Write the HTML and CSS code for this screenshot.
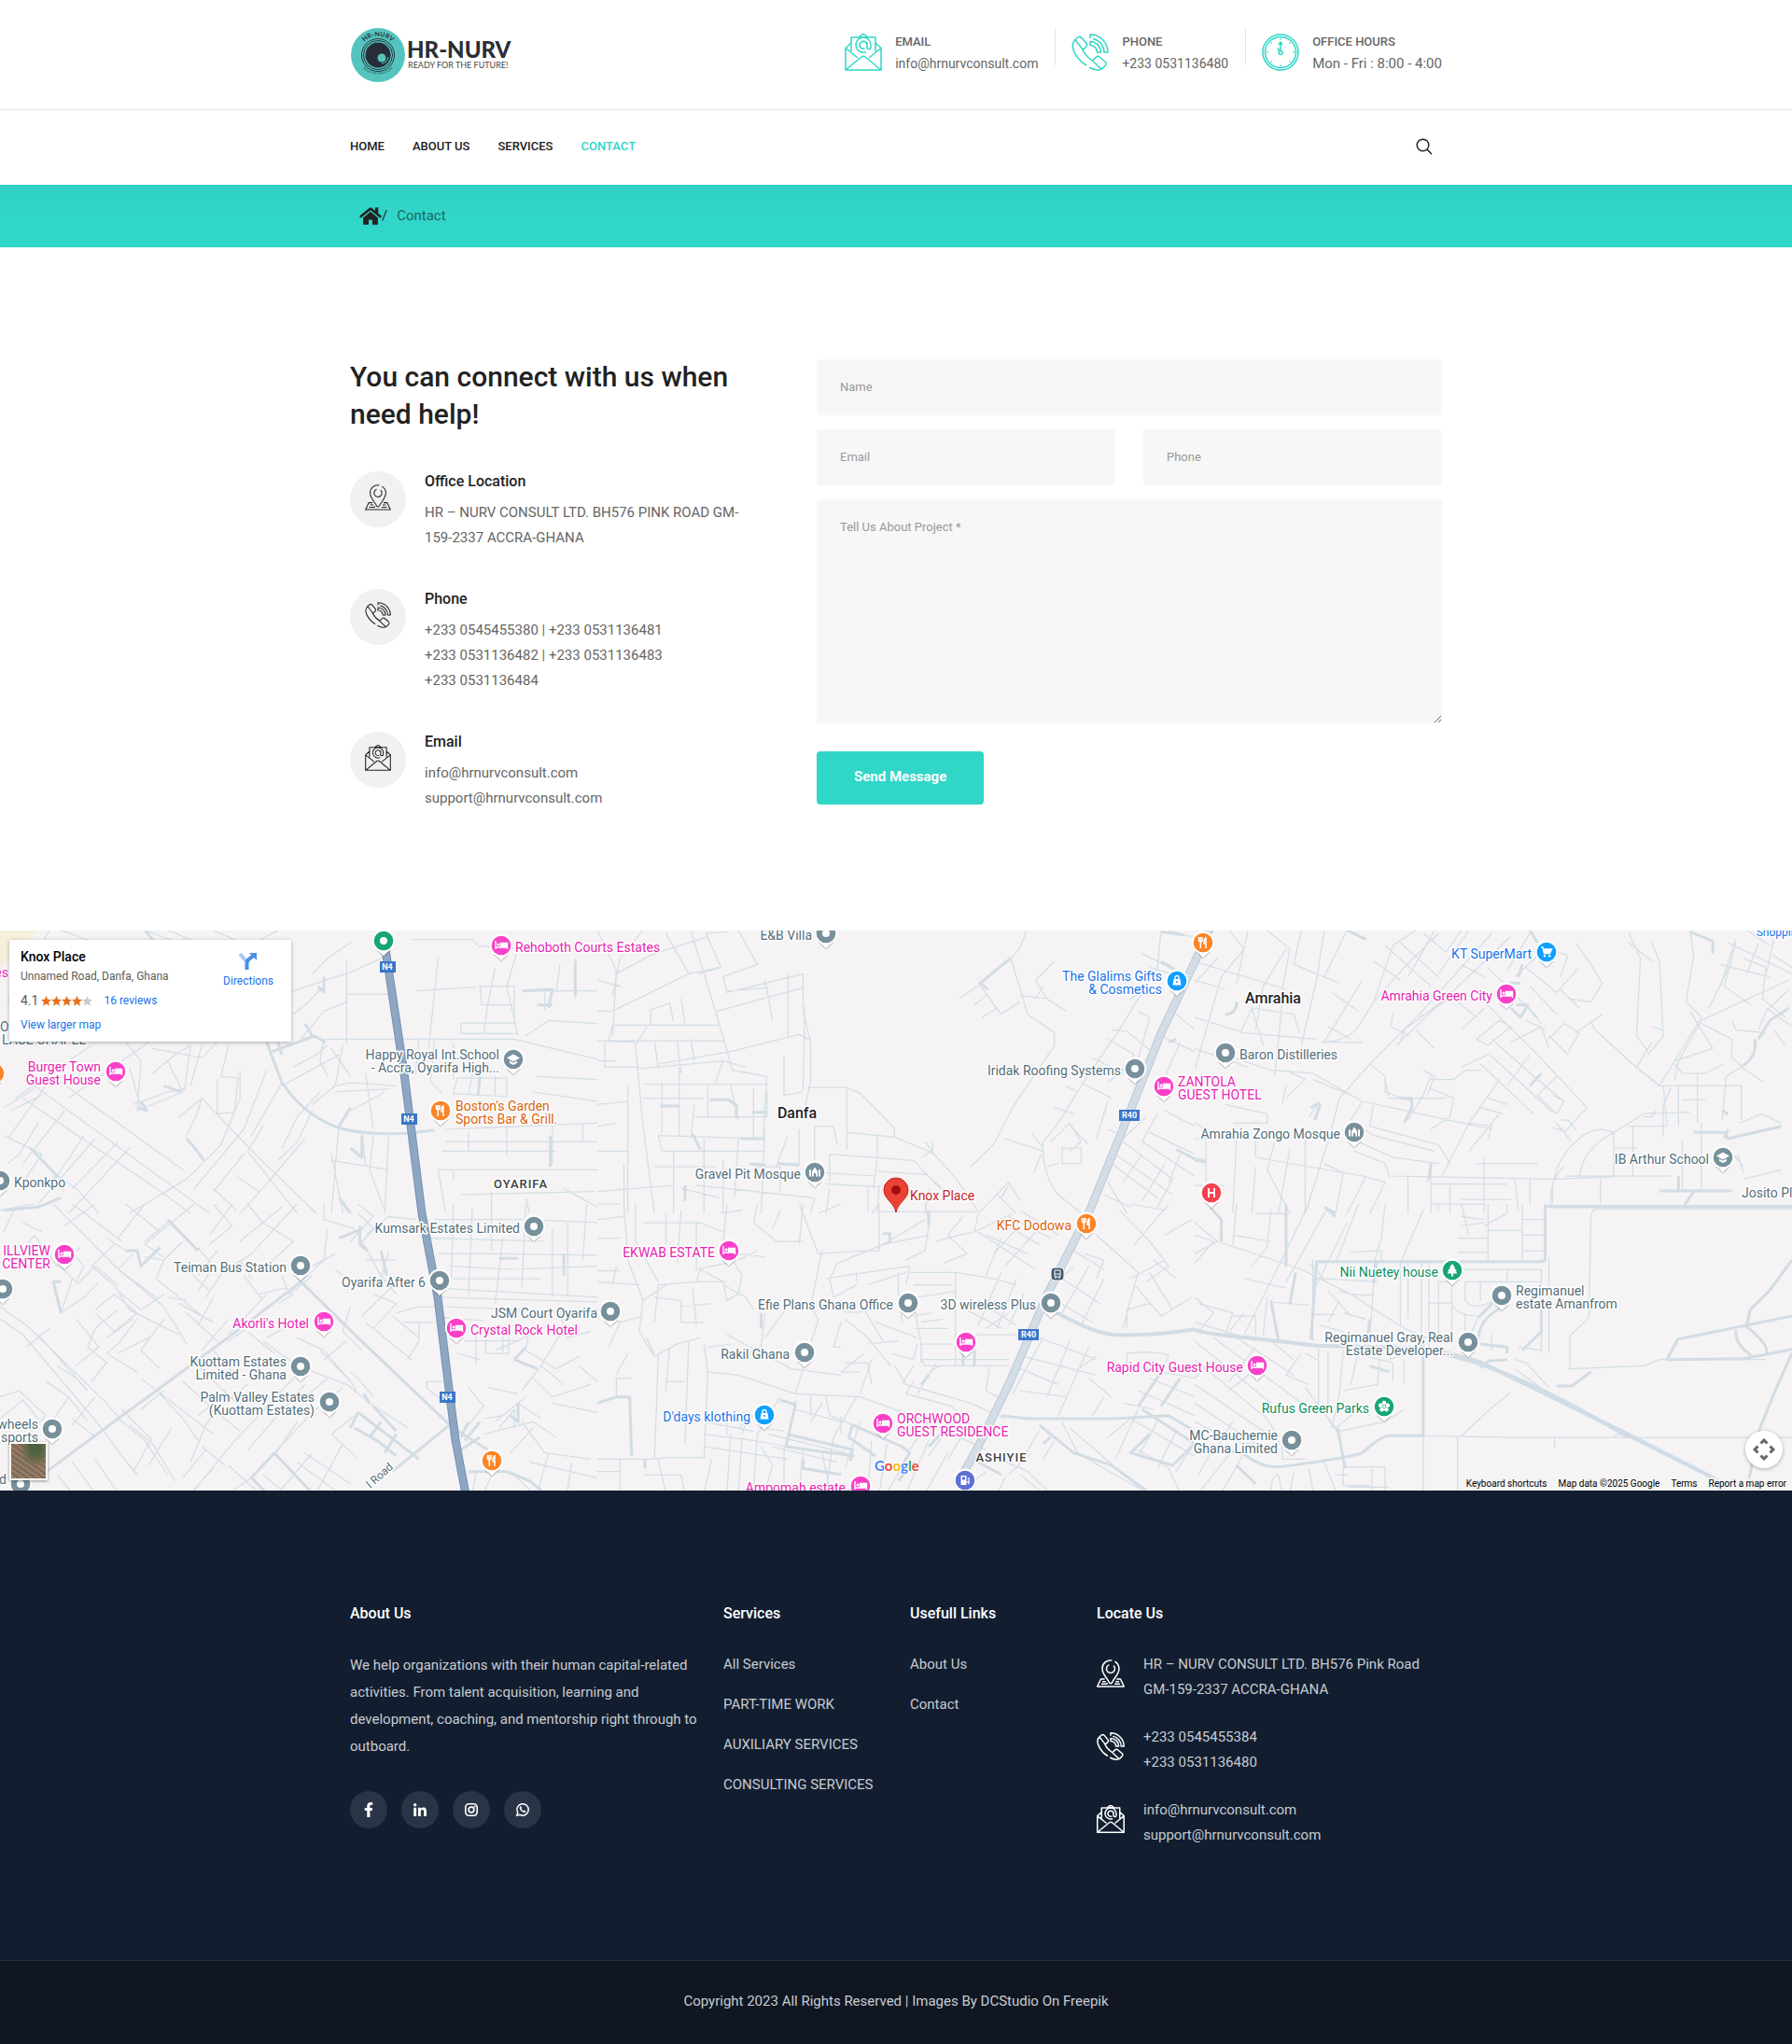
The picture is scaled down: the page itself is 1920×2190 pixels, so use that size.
FILE: index.html
```html
<!DOCTYPE html>
<html lang="en">
<head>
<meta charset="utf-8">
<meta name="viewport" content="width=device-width, initial-scale=1">
<title>Contact - HR-NURV</title>
<link rel="stylesheet" href="styles.css">
</head>
<body>
<svg class="sprite" aria-hidden="true">
  <defs>
    <symbol id="i-mail" viewBox="0 0 40 40">
      <path d="M7 10 1 15.500V39h38V15.500L33 10M7 19V4h26v15M15 4l3-2.500q2-1.500 4 0L25 4M1 15.500 14 26M39 15.500 26 26M1 39l17-14q2-1.500 4 0l17 14"/>
      <path d="M23 19.500a8 8 0 1 1 5-7.500v3q-1 3-4 1V9M24 12.500a4 4 0 1 0-2.500 3.500"/>
    </symbol>
    <symbol id="i-phone" viewBox="0 0 40 40">
      <path d="M4 6.500 7 4q2-1.500 4 .5l5 6q1.500 2-.5 4L12 17.500q3 6.500 10.500 11.500l3.500-3.500q2-2 4-.5l6 5q2 2 .5 4L33 37.500q-6 3.500-14-1.500M16 34Q6 28 2 17.500 0 10 4 6.500l8.500 11M22.500 29l9.500 9"/>
      <path d="M20 5V1a19 19 0 0 1 19 19h-4A15 15 0 0 0 23 5.500M20 8.500a11.500 11.500 0 0 1 11.500 11.500h-4A7.500 7.500 0 0 0 20 12.500z"/>
    </symbol>
    <symbol id="i-clock" viewBox="0 0 40 40">
      <circle cx="20" cy="20" r="19"/><circle cx="20" cy="20" r="16.500"/>
      <path d="M20 18.500V9M18 12l2-3 2 3M20 5v1.500M20 33.500V35M5 20h1.500M33.500 20H35M9.500 9.500l1 1M29.500 29.500l1 1M30.500 9.500l-1 1M10.500 29.500l-1 1M17 15.500l1.500 2.500"/>
      <circle cx="20" cy="20.500" r="2"/>
    </symbol>
    <symbol id="i-place" viewBox="0 0 40 40">
      <path d="M22 1.500A11.500 11.500 0 0 0 8 13c0 8 6 12 10 20q2 2.500 4 0c4-8 10-12 10-20A12 12 0 0 0 26 3"/>
      <path d="M18 7.500a6 6 0 1 0 6 1.200M11.500 28H6L1 38.500h38L34 28h-5.500M8 31.500h5M6.500 35h8l1-1.500M27 31.500h5M25.500 35h8"/>
    </symbol>
    <symbol id="i-search" viewBox="0 0 18 18"><circle cx="7.500" cy="7.500" r="6.300"/><path d="m12 12 5 5.300"/></symbol>
    <symbol id="i-home" viewBox="0 0 576 512"><path d="M280.370 148.260 96 300.110V464a16 16 0 0 0 16 16l112.060-.29a16 16 0 0 0 15.920-16V368a16 16 0 0 1 16-16h64a16 16 0 0 1 16 16v95.640a16 16 0 0 0 16 16.050L464 480a16 16 0 0 0 16-16V300L295.670 148.260a12.190 12.190 0 0 0-15.300 0zM571.600 251.470 488 182.560V44.050a12 12 0 0 0-12-12h-56a12 12 0 0 0-12 12v72.610L318.470 43a48 48 0 0 0-61 0L4.340 251.470a12 12 0 0 0-1.600 16.900l25.500 31A12 12 0 0 0 45.150 301l235.220-193.740a12.190 12.190 0 0 1 15.300 0L530.900 301a12 12 0 0 0 16.900-1.600l25.500-31a12 12 0 0 0-1.700-16.930z"/></symbol>
    <symbol id="i-facebook" viewBox="0 0 320 512"><path d="m279.140 288 14.220-92.660h-88.910v-60.130c0-25.350 12.420-50.060 52.240-50.060h40.420V6.260S260.430 0 225.360 0c-73.220 0-121.080 44.380-121.080 124.720v70.620H22.890V288h81.390v224h100.170V288z"/></symbol>
    <symbol id="i-linkedin" viewBox="0 0 448 512"><path d="M100.280 480H7.400V180.900h92.880zM53.790 140.100C24.090 140.100 0 115.500 0 85.800a53.790 53.790 0 0 1 107.580 0c0 29.700-24.100 54.300-53.790 54.300zM447.900 480h-92.680V334.400c0-34.700-.7-79.200-48.290-79.200-48.290 0-55.690 37.700-55.690 76.700V480h-92.780V180.900h89.080v40.800h1.300c12.400-23.500 42.690-48.300 87.880-48.300 94 0 111.280 61.900 111.280 142.300V480z"/></symbol>
    <symbol id="i-instagram" viewBox="0 0 16 16"><rect x="1.800" y="1.800" width="12.400" height="12.400" rx="3.600" fill="none" stroke="currentColor" stroke-width="1.600"/><circle cx="8" cy="8" r="2.900" fill="none" stroke="currentColor" stroke-width="1.600"/><circle cx="11.600" cy="4.400" r="1"/></symbol>
    <symbol id="i-whatsapp" viewBox="0 0 16 16"><path d="M1.800 14.200 2.700 11A6.200 6.200 0 1 1 5 13.300z" fill="none" stroke="currentColor" stroke-width="1.500"/><path d="M5.300 4.600q.8-.8 1.200.1l.6 1.300-.7 1q.8 1.500 2.500 2.300l.8-.9 1.700.8q.3 1.600-1.400 1.900-1.600.2-3.600-1.800-2.600-2.600-1.100-4.700z"/></symbol>

    <g id="pin">
      <path class="pin-shadow" d="M0 17.500 8 10H-8z"/>
      <path d="M0 16.500C-2 13-5 12-8.500 8.500a12.200 12.200 0 1 1 17 0C5 12 2 13 0 16.500z" fill="#fff"/>
      <circle r="10.300" fill="currentColor"/>
    </g>
    <g id="g-dot"><use href="#pin"/><circle r="4" fill="#fff"/></g>
    <g id="g-bed"><use href="#pin"/><path d="M-6-5v9M-6 2H6.500v2M6.500 2V-2.500H-.5V2" fill="none" stroke="#fff" stroke-width="1.400"/><path d="M0-2.500h6V2H0z" fill="#fff"/><circle cx="-3" cy="-1" r="1.500" fill="#fff"/></g>
    <g id="g-food"><use href="#pin"/><path d="M-4.500-6v4q1.800 2 3.600 0v-4M-2.700-6V6M3 6V-5q-2 1-2 6h2" fill="none" stroke="#fff" stroke-width="1.500"/></g>
    <g id="g-bag"><use href="#pin"/><path d="M-3.500-2h7l1 6.500h-9z" fill="#fff"/><path d="M-2-2v-1.500a2 2 0 0 1 4 0V-2" fill="none" stroke="#fff" stroke-width="1.300"/><circle cy="1" r="1" fill="currentColor"/></g>
    <g id="g-school"><use href="#pin"/><path d="M-7-1.500 0-5.500l7 4L0 2.500zM-4 1.500 0 3.800l4-2.300V4L0 6l-4-2z" fill="#fff"/></g>
    <g id="g-mosque"><use href="#pin"/><path d="M-6 4.500V-2l1-1.500L-4-2v6.500zM4 4.500V-2l1-1.500L6-2v6.500zM-3 4.500V-1L0-5.500 3-1v5.500H1.200V2a1.200 1.200 0 0 0-2.400 0v2.500z" fill="#fff"/></g>
    <g id="g-cart"><use href="#pin"/><path d="M-6-5h2l1.500 6.500h6L5.500-3H-3" fill="none" stroke="#fff" stroke-width="1.400"/><path d="M-3-3h8L3.500 1h-6z" fill="#fff"/><circle cx="-2" cy="4.300" r="1.200" fill="#fff"/><circle cx="3.200" cy="4.300" r="1.200" fill="#fff"/></g>
    <g id="g-hospital"><use href="#pin"/><path d="M-3-5V5M3-5V5M-3 0h6" fill="none" stroke="#fff" stroke-width="2"/></g>
    <g id="g-tree"><use href="#pin"/><path d="m0-7 3 4H2l3 4H3.500L5.500 3.500H1V6.500h-2v-3h-4.500L-3.500 1H-5l3-4h-1z" fill="#fff"/></g>
    <g id="g-flower"><use href="#pin"/><g fill="#fff"><circle cy="-4" r="2.300"/><circle cx="3.800" cy="-1.200" r="2.300"/><circle cx="2.400" cy="3.300" r="2.300"/><circle cx="-2.400" cy="3.300" r="2.300"/><circle cx="-3.800" cy="-1.200" r="2.300"/></g><circle r="1.500" fill="#fff"/></g>
    <g id="g-fuel"><use href="#pin"/><path d="M-4.500-5h6V5h-6z" fill="#fff"/><path d="M-3-3.500h3v3h-3z" fill="currentColor"/><path d="M2 1.500q2 0 2 2.500V-3" fill="none" stroke="#fff" stroke-width="1.200"/></g>
  </defs>
</svg>

<header class="header">
  <div class="wrap header-top">
    <a class="logo" href="#" aria-label="HR-NURV home">
      <svg width="184" height="60" viewBox="0 0 184 60">
        <defs><path id="arc-top" d="M11 22a21 21 0 0 1 38 0"/><path id="arc-bottom" d="M10 38a22 22 0 0 0 40 0"/></defs>
        <circle cx="30" cy="30" r="29" fill="#55c4be"/>
        <circle cx="30" cy="30" r="17.500" fill="none" stroke="#26333d"/>
        <circle cx="30" cy="30" r="15.500" fill="none" stroke="#26333d"/>
        <circle cx="30" cy="30" r="13.500" fill="#272d38"/>
        <circle cx="34" cy="33" r="4.500" fill="#55c4be"/>
        <path d="M34 39a8 8 0 0 0 7-7" fill="none" stroke="#55c4be"/>
        <text class="logo-ring"><textPath href="#arc-top" startOffset="50%">HR-NURV</textPath></text>
        <text class="logo-ring-small"><textPath href="#arc-bottom" startOffset="50%">READY FOR THE FUTURE!</textPath></text>
        <text class="logo-name" x="61" y="33">HR-NURV</text>
        <text class="logo-tag" x="62" y="44">READY FOR THE FUTURE!</text>
      </svg>
    </a>
    <ul class="facts">
      <li class="fact"><svg class="line-icon"><use href="#i-mail"/></svg><div><h6>EMAIL</h6><a href="#">info@hrnurvconsult.com</a></div></li>
      <li class="fact"><svg class="line-icon"><use href="#i-phone"/></svg><div><h6>PHONE</h6><a href="#">+233 0531136480</a></div></li>
      <li class="fact"><svg class="line-icon"><use href="#i-clock"/></svg><div><h6>OFFICE HOURS</h6><p>Mon - Fri : 8:00 - 4:00</p></div></li>
    </ul>
  </div>
  <div class="nav-row">
    <div class="wrap nav-inner">
      <nav class="nav">
        <a href="#">HOME</a><a href="#">ABOUT US</a><a href="#">SERVICES</a><a class="active" href="#">CONTACT</a>
      </nav>
      <button class="search" type="button" aria-label="Search"><svg width="18" height="18"><use href="#i-search"/></svg></button>
    </div>
  </div>
</header>

<div class="crumbs">
  <div class="wrap crumbs-inner">
    <a href="#" aria-label="Home"><svg width="24" height="21"><use href="#i-home"/></svg></a><span class="slash">/</span><span class="here">Contact</span>
  </div>
</div>

<main>
  <section class="wrap contact">
    <div>
      <h2>You can connect with us when need help!</h2>
      <ul class="places">
        <li><span class="disc"><svg><use href="#i-place"/></svg></span><div><h5>Office Location</h5><p>HR – NURV CONSULT LTD. BH576 PINK ROAD GM-159-2337 ACCRA-GHANA</p></div></li>
        <li><span class="disc"><svg><use href="#i-phone"/></svg></span><div><h5>Phone</h5><p>+233 0545455380 | +233 0531136481<br>+233 0531136482 | +233 0531136483<br>+233 0531136484</p></div></li>
        <li><span class="disc"><svg><use href="#i-mail"/></svg></span><div><h5>Email</h5><p>info@hrnurvconsult.com<br>support@hrnurvconsult.com</p></div></li>
      </ul>
    </div>
    <form class="form">
      <input class="full" type="text" placeholder="Name" aria-label="Name">
      <input type="email" placeholder="Email" aria-label="Email">
      <input type="tel" placeholder="Phone" aria-label="Phone">
      <textarea class="full" placeholder="Tell Us About Project *" aria-label="Tell Us About Project"></textarea>
      <button type="submit">Send Message</button>
    </form>
  </section>

  <section class="map" aria-label="Map">
    <svg class="map-canvas" viewBox="0 0 1920 600" preserveAspectRatio="xMidYMid slice">
      <rect width="1920" height="600" fill="#f5f3f4"/>
      <path d="M0 0h40L0 40z" fill="#f6efdc"/>
      <svg x="0" y="-7" width="640" height="310" viewBox="0 0 1568 930" preserveAspectRatio="none">
        <path class="rd" d="M130 20 20 250M160 20l90 40M380 20l110 50M440 20l120 60 210 140M770 215l150-60 90-50M850 190v30M820 160l40-50 60-50M670 60l60-40M560 20l110 60M910 120v270M910 225h130M770 290l40-40 30-40M790 370l60-90 60-30M850 370h500l218 65M1080 50h160l20 25M1260 70l100 10-30 120 30 160M1090 215l160-12M1150 110l-25 290M1260 200h90v60h-85zM1300 140l-20 120-10 90M1210 318h140v-55M1210 318v34h150M1380 215h188M1430 215v60M1470 130l-10 90M1510 110v130M1380 360l60-50 128 10M1100 365l-10 120M1140 375l-10 130 30 40M1190 380v120M1240 480l-10 70M1200 495h130v60l-140-10zM1300 490v60M1410 490l158 10M1400 540l168 30M1170 660l398-20M1170 700h398M1160 730h300M1230 670v60M1330 650v90M1450 650v120M1530 640v60M1150 790h418M1150 790l20 140M1190 790v30M1210 870l350-10M1290 860v70M1380 880l10 50M1480 850l88 60"/>
        <path class="rd" d="M240 390 40 560M330 380l40 60-10 160M390 380 180 560M400 400l130 30 40-50M400 480l60-60 40-30M500 390l-15 140-45 10M530 390l-30 130M440 440l40 100-120 60M60 560l350 290 90 80M90 520l460 410M150 500l330 290M20 690l100-170M10 590l80-60M340 460l30 130M440 540l-90 40M470 620l60-60M530 560l-10 40-30 80M530 560l140 180 160 190M600 390l-20 100 45 5-10 110-45 5V500M630 470v90l-50 150-90 110-150 110M700 470l-60 190-130 190M740 510l-80 170M740 520l90-60 60-40M770 460l60-40 30-30M850 370l-10 70 20 50M870 400l50 90M900 390l-20 130-60 60M960 480l20 180M880 520l40-10 120 10M880 540l140-10M920 600l90-60M840 540l-60 80-40 100M820 600l-40 100-50 60M800 690l-110 160-60 80M690 650l-40 80 130 200M640 740l-80 120M560 850l60 70M620 810l60 50M890 640l-20 290M870 740l30 190M950 670l10 110M980 680l-10 110 40 130M1020 680l-10 250M870 760l150 30M30 600l80-50M10 680l100 60-60 110M100 640l-50 100-30 30M170 600l-110 170M220 680l-70 130 50 40M310 700l-120 150M250 690l-150 210M200 850l60 80M340 720l-160 210"/>
        <path class="rd2" d="M700 380l40 130q50 90 120 130 60 40 210 33l70-10M730 380l10 40M715 410l110-50 30 20M820 360l-20-40M430 520l45 20M490 690l15 20 30 50M370 570l15 30-25-10M850 170v50l-15-20M80 720l70 90-20 20M10 920l90-10 60-30M890 650l30-60M1370 215l80-5-10 60M1410 260h40M1260 490l-5 60M1445 680v100M1510 120v110M890 880l30 50M380 20l40 60M480 50l50 30M950 680v70l-30-30"/>
      </svg>
      <svg x="640" y="-7" width="640" height="310" viewBox="0 0 1568 930" preserveAspectRatio="none">
        <path class="rd" d="M0 20l50 130-10 210M120 20l-60 90-20 120M180 30l60 130M50 160l90-60 150-60M245 20l70 280 40 170 90 20-10 200M315 280l225-75M40 280l200-120 80-20M0 180l60 20M0 280h40M345 25l-60 5 40 110-60 20M370 20l50 110-90 40 10 50 200-60v120l20 100v120l-15 90M340 215l110-10M440 180l20 130M500 160v200M545 265l-5 270M40 325h280M40 325l-10 50h300M140 325v-50l50-20 10 60M220 240l10 80M130 330l-30 60 20 260 30 280M0 375l100 5M20 375v85h90M150 375l10 90M210 380l10 100M245 370l10 70M0 440h50M160 450l190-40 180-55 30 20M110 465l220-25 60 20M330 440l-20 70M120 515l330 0M215 460v220M120 560h160M80 520v410M0 580l80-10M0 650l50-10M170 510v160M290 520v100M350 520l20 110M255 620h190v-80M255 580l-10 110M410 530v160M160 680l270 10M160 680l10 50h270M200 730v200M280 690v240M370 690l-10 190M440 660l-10 270M490 420v130l50-10M550 525h105l35 20 90 110v30l100 50 60 80 60 110M655 525v200M655 670l130 15M570 650v110M570 650h50l10 60M735 680v70l-10 100M610 740l220 20 70 90M610 740v90M600 800l130 10M600 835l140 10M735 795l130 10 70 80M860 700l20 30-30 20M880 700v40M0 730h80M0 860l200-20M70 770v150M0 900h60M150 780h160M330 760v170M220 850l100 30M260 840l310 40M410 780h70v80M500 680l-30 100M530 660v110M570 880l-10 50M610 850l-10 80M740 840l-5 85 260 0M710 850v75M870 850l-10 80M1000 930l80-100 30 60M1080 840l-20 40M1050 870l50 60M1125 20q-10 60-40 90l30 120 15 60 70 60v40l-110 200-50 120-60 70M1200 120l-50 60 30 60-70-10M1180 240l50 40M1170 200l-20 40M1110 250l-50 40-60-100M950 240l60-50M990 260l30-30M1010 300l40-30M1070 690l100 40M1140 670l30 50M1165 740l-20 60"/>
        <path class="rd" d="M1480 20l-10 120-100 200-100 180-60 120-40 60q-5 100 40 170l60 60M1430 95l80 50M1450 140l60 20M1400 240l50-40M1420 280l30 20-30 130-80 80M1350 340l40 5 60 60M1340 370l70 50-40 60M1300 430l80 50M1270 510l80 50M1230 520l30 20M1200 590l50 20M1500 20l60 20M1510 280l58 60M1480 360l88 50M1530 380l-40 110-10 50M1490 600l78 50M1470 610l-40 90 138 110M1450 670l118 70M1340 660l20 10M1370 690l140 130-40 90M1360 740l150 130M1350 770l120 110M1380 690l60-70M1430 740l-50 90M1490 770l-60 120M1530 740l-30 90M1220 720h50v50h-50zM1190 700l50-60 30 60-30 30M1310 690l30-120M1250 660l40 50M1340 830l50 100M1330 870l70 40M1400 900l90 20M1180 780l30-10"/>
        <path class="rd2" d="M295 565h50l20 20v40M405 605h40M440 605M250 675l20 50M375 690h65M400 770l40 5M475 770l55 5M230 840v50M165 585h50M1085 110l-80 80 20 20M1480 25l60 10M1480 120l40 30M1520 725l48 30M1500 380l20-10"/>
      </svg>
      <svg x="1280" y="-7" width="640" height="310" viewBox="0 0 1568 930" preserveAspectRatio="none">
        <path class="rd" d="M60 110 0 190M90 20l40 60-60 90-70 300M0 180l80 30M0 120l240 90M140 20l-30 170M190 20l60 60-20 130M240 80l-60 120-20 140M280 20l-20 110 120 60M340 20l-20 160-40 210M400 20l-60 150M0 300l130 50 190 20M120 350l30-80 110 20 15 60M150 270l30 120M230 250l-20 240M80 420l120 50 110 10 130 90 340 90M0 400l140 60M330 380q80 0 110-70l30-60 80-110 90-110M440 180l-100 200 100 0M360 220l70 60M350 330l60 40M470 250l50-180 60-50M500 70l120 130M540 60l100 110M470 120l70 60M560 170l70-150M600 30l60 60 40-70M640 160l80-140M780 30 590 290 460 450 380 560 350 700l-60 230M830 40 640 260 530 390M770 140l130 160M880 30l-60 120M700 130l60 40M580 340l50 60M590 300l80-60M520 290l-5 40 50 30M540 380l10-40 120-110M700 340l60-70M690 250l50 50M600 470l30 20-20 60M760 250l140 170 130 170-60 80M740 370l60-60 30 20-60 60zM780 370l110 120 80 80M770 415l170 190M700 460l70-40M750 450l140 160M620 490l-20 60-40 80M620 500l60 0 30-30h40M620 530l60 30-10 60-50 40M500 500l10 60 150 0M830 380l80-50 20 70M880 420l-60 100M920 380l50-60 40 30-30 60M920 340l-50-30M1000 350l70-60M1040 310l10 30 100 110 60 60M930 360l50 60M860 250l50 70M840 170l80-90 60 20-20 70M870 140l80 80 60-80M880 200l70 90M960 210l50 60M980 240l60 10 30-60-30-60-40-70M940 550l30 20-20 40-50-60 50-60M800 500l-80 140M770 560l50 20M750 590l60 20M720 640l60 10-10 40M720 640l-70 170M800 610l-80 120"/>
        <path class="rd" d="M460 450l40 40v50l70 30M440 570l-30 60 60 50M470 570l-10 80 180 60 30 60M470 680l160 50M430 700l90 50 120 20M420 730l80 40 10 40M510 810l430 10 160-8M160 750l280 60 60 20M160 750l0-60M110 690l-10 240M160 780l-10 150M0 690h110M30 700v200M0 750l30 10M0 840h80M100 640h90v-30L80 580M0 640l80 50M240 470l50 30-50 60M240 520l-10 60M310 500l100 50M300 620l30-50M210 700l-20 90 60 140M250 720l-30 210M290 690v240M340 770l50 30-20 130M450 810l-50 120M500 830l-40 100M560 810v120M620 820v110M620 770l-10 60M620 836h200M760 750v180M820 770h80M740 770h100M840 820l10 100M880 820v80M670 840v90M620 900h140M700 885h130M970 780q-40 40-35 130M940 900q-10-120 60-200 30-40 70-40l30 10v140M1010 810q10-90 90-140M950 640l40 60M960 630h20l20 30M940 655l30 10M1100 670l80-60 120-5M1150 650v160M1100 720h60M970 810l280 0M1065 810v90M1180 620h20l10-20M1140 650h100M1240 650l-10-130M1215 520h220v110M1250 525l-20 60 0 100M1270 520v130M1320 480v160M1280 565h60M1385 630l10-140 40-30 60 50M1330 640v220M1280 700v160M1250 760h90M1400 720l40 60M1430 640l60-30 48 30M1440 820l100-30M1440 800l-15-60"/>
        <path class="rd" d="M1200 60l20 60 10 240-40 60M1140 30l30 80-10 250 30 50M1140 60l60 60M1300 20l10 80-20 150 40 50-90 180-20 40-60-60 40-80M1330 310l70-40 160-90M1330 310l-60 130-10 60M1350 270l60-150M1380 200l40-150M1330 320l80 50v60l30 30M1300 280l60 120-100 40M1260 450l20 30h60l50-30M1200 330l30 10M1420 60l-30 140 70 60M1440 110l60 30-10 100 60 60M1400 60l168 100M1480 60l-30 100M1520 50l-20 110M1410 310l10 30 80 10M1500 270l68 60M1520 340l30 50M1560 210l-60 70-20 60M1380 130l130 40M1568 140l-50-40M1450 20l60 50"/>
        <path class="rd2" d="M920 908h648M570 560v30l-20 50M540 560h30M305 590l20-15M330 580l-15 50M910 480l-30 40M850 170l10-40M825 190l30 0M830 270l25 30 20-40h-30M880 20l20 40M110 250q0 40-30 40M1310 670h80l10 20 140-40M1390 690l10-30M1310 860l-25 45M1220 858h190M1300 25l60 30 0 40M1470 370q10 50-30 85M1560 270l-50 40-30 60M1270 810v50M1385 600l15 10M620 770l-3 50M400 20l50 30M0 760l30 5M340 910l30 20"/>
      </svg>
      <svg x="0" y="293" width="640" height="310" viewBox="0 0 1568 930" preserveAspectRatio="none">
        <path class="rd" d="M0 20 90 0M60 60l50 30M10 90l30-80M140 0l170 210 120 120 60 120M190 0l130 120M330 0l90 90M380 0l-70 110M250 0l-80 70M510 0l-130 130 50 40M560 0l50 70-60 60M610 0l-60 100M650 0l40 60 80 60-80 90M740 10l-60 60-50 50M780 0l-120 160-50 40M850 0v50l80 30M860 80l-10 100-60 70M940 0l40 40-60 80M820 200l60-40M440 60l-60 60M350 160l-40 50 100 90M330 150l-50-40M300 130l-60 70M480 120l-50 60-20 60 130 130M430 180l-50-10M500 220l50 60M520 140l40 60-40 80M570 150l-50 80M600 190l-60 110M90 100l60 100 60-60M90 100l-40 70M150 190l50 60 20-50-40-60M200 260l50-60 60 60M190 240l-30 110 60-50 40-50M240 200l60 60 40 80 130 80M0 330l70 60 210 250 40 60 60 60 60 110M0 370l60 50 200 290 60 100 40 60M100 420l130 180M130 400l-60 60M200 370l60 90-60 60M250 350l50 60 60-60-60-60-50 50M310 280l60 60 60-50M310 340l-60 60-20 60 50 50-40 60M280 430l70-60M360 370l-50 80-30 30 80 60M310 480l80-50M430 370l-60 100 50 60M470 320l90 60M490 350l80 90M440 300l50 10M600 370l-70 100M560 300l-40 90M640 230l50 80M680 290l70-20 20 20-40 30M740 230l20 60 60-60M630 180l30 60M600 420l100-130M0 690l60-60 40 60M0 620l50-20M50 600l70 80-70 90M120 570l60 50-60 110M180 620l50 80M250 620l-60 90M190 690l60 60M200 560l-50-40"/>
        <path class="rd" d="M370 560l190 180M430 600l-60 60M560 470l60 80M420 610l60 80 40 70M480 570l80 90 70 70M520 520l110 130M520 680l40-40M600 620l-60 90-40 120M540 790l-60 90M340 710l60 60 60 120M320 660l80 100M400 750l-50 110M450 720l-60 120M650 580l-60 60M770 560l-160 210-100 150M800 580l-150 210M860 560l-60 60M690 440l90 80 130 60 60 60 100 80M700 430l60-40M780 430l70 40 70 100M840 470l80 100 20 40M920 540l20 20 40 60M600 440l60-50M650 410l70 70M850 500l60-60M900 590l-80 80-100 130M930 680l-60 60 70 80M780 700l-60 110M820 800l-90 130M900 770l-70 160M690 870l60 60M660 880l-60 50M600 840l80 90M780 830l110 100M800 800l120 100M530 780l60 60M560 850l-60 80M250 820l60 110M190 830l60 100M150 870l40 60M1120 570h50v40M1120 570v20l70 70M940 30l50 60M960 100l60-60 70 10M1000 60l-50 60 50 110 40 60M900 230l-20-20M930 240l110 10M1020 150l-20 90M960 180h80M1050 240l-50 60-50 60M920 330l-20 80 50 60M980 290l60 30-60 80M1040 350l60-20 40 0M1060 380l80 0M1100 380v60l-30 60M960 380l120 120M1030 360l70 70M1160 300l408 15M1170 330l400 20M1150 365l120 10M1140 50h230l198 10M1130 110l300 10M1150 160h160l258 5M1180 200l160 10 228-10M1190 240h230M1150 270l418 30M1190 0l-5 240M1240 10l-10 280M1290 0v150M1320 110l-20 210M1380 0l-10 270M1450 80v220M1490 60v240M1540 0l-10 180M1250 420v100M1220 440h140l30-20M1275 430v50h60v-50M1320 420v60M1360 440l-60 30M1390 400l-10 70 80 60 60-40M1470 350l20 80 60-20M1480 400l-60 120-50 80M1420 520l60 60M1360 610l-80-20M1380 620l-60 60-50 10M1230 590l40 60-40 60M1300 700l60-60 60 50M1310 720l40-60v60M1270 740l130-40 60 50M1400 560l50 60 100-40M1450 640l118 30M1370 700l60 100 120 20M1400 720l-60 80M1250 860l-10 70M1290 870l-20 60M1340 860l60 70M1440 800l-30 130M1500 830l-10 90M1390 830l178 50M1200 480l60 20M1520 520l48 50"/>
        <path class="rd2" d="M100 880 310 690 400 610 620 410 790 250l150 180 240 280M790 250l-20-40M330 150h30l10 50 50-60M440 50l80 100M160 350l-20-100 20 0M945 70v60l20 20M940 670l160 150M930 720l60 40 50 50M940 670l-20 50M980 650l60 80M1000 700l-30 50M1040 740l-30 60M1090 800l90-90M1090 800l-60 60M1190 720l90 70M1220 760l40-60M1210 790l50-40M1230 700l-20 50M720 800l100 130M720 800l-60 80 40 50M970 640l-15-30M1350 500l60 30M1350 500l30-40M1310 175h50M1480 160v70M1000 150l15 80M1340 680l20 20v-60M1230 860h100l60 30 40 40M890 110l60-30"/>
      </svg>
      <svg x="640" y="293" width="640" height="310" viewBox="0 0 1568 930" preserveAspectRatio="none">
        <path class="rd" d="M70 0l10 180 40 130-10 100 40 80M0 50l70-10M0 110h60M100 0v120l60 130M120 60h150l60 30M180 30v100M220 20l-10 170M160 260l100-10 80 0M0 250l110 10M50 200l-10 60M0 215h60M260 60v150l80-20M270 210l-10 40M340 0l-10 130M380 20l-60 10M420 0l-10 60 60 60 70 0M480 20l-20 60M350 170l30 60-10 60-30 20-10-60-60-40M370 180l50-30M440 170l-70-10M330 260l60 40 20 40M250 270l10 120M160 260l-10 120M120 310l60-50M150 300l70 10v70h60M220 330l80-10M0 340l60 40 60-20M60 380l-30 80M150 490l60-40 60-20M130 430l20 60M160 490l-10 330M190 460l-10 140M240 440l-10 330M280 450l10 90 80 10 150 60M290 540l-10 280M0 640l50-20M90 560h-40v60M50 550l30-70M180 570h50M290 460l60-10M340 420l170 110 130 20M440 350l-10 110-40 20M500 330l-60 100M530 0l50 160 120-10M540 0l-10 130M640 0l-60 30M740 0v150l-40 0M740 0l-20 30M590 150l-30 180 20 40-60 240M610 240l20-50 120-60 120-30M600 240q100-20 220-40M610 240l10 60M680 220v30M710 260l100-40M790 220v60l10 100M820 200l-10 60M730 330q-50 30-90 10M620 300l60-40M640 380l-20 80 20 0M650 370l60 60 60 90M700 340l50 100M730 380l110 50M830 320l20 130v60M850 450h80M850 380l60-10M830 400h90M830 360l50-10M790 440l-80 10M770 480l60 20 10-50M700 480l-60 60M650 510h60l10 70M640 540h50M720 500l-30 110M780 520l30 60M850 500l10 20 220 0M850 500h230M890 510l-50 100M870 540l30-20M810 580l170 60 90 50M750 130l110-80M870 70l-10 80-50 30M860 0l10 60M950 100l-60 20M960 40l-40 60 50 60-60 30M1000 30l-10 60-40 10M940 220v300M820 220l120 0 100 20 60 20M830 260h100M840 300l100-20M990 90l100-60M1060 110l-40 120M1000 90l150 120M1020 100l110 60M1060 60l100 70M1080 40l110 70M1110 20l100 80M1100 80l-60 80M1150 90l-80 110M1060 220l-60 170M1100 240l-50 160M1120 290l-40 100M1000 310l100 80M970 340l90 60M940 420h160M1030 520l-10 80 30 20"/>
        <path class="rd" d="M520 610l170 10 180 80 150 90M480 620l-60 120-10 180M520 630l-20 140M560 620v60M600 620l10 60 60 30M520 660l120 40M450 740l200 60M460 780l170 50M490 780v140M540 790l-10 130M590 800l20 120M280 740l130 20 90 20M280 780l220 40M280 700l130 30M300 820l-20 110M350 740l-10 190M380 750l-10 180M430 780l30 60-20 80M340 670v70M390 700l-10 40M430 660l-60 60M430 720l60 10M590 640l-30 60M640 680v60M680 620l-60 130-20 180M690 700l-40 150M720 760l-10 170M760 770l-20 160M820 800l-60 130M870 760l-60 170M920 800l-60 130M970 820l-30 70M870 700l-50 90M920 720l-50 90M960 740l-40 80M0 820h130l60-5h90M60 820v110M160 820l20 110M0 860h60M120 870h100l10 60M800 580l30-60M830 570l-20 40 120 40 50 60M1020 400l60-50M1250 150l80 60M1220 240l100 80M1190 300l110 80M1290 200l-70 150M1330 240l-60 150M1280 160l50 20-20 60M1200 260l50-60M1370 20l80 100 50 80-60 50M1500 0l-90 130M1310 100l110 120-10 40 70 100 80-60M1400 240l90-60M1560 50l-70 50M1450 220l60 120M1460 180l60 60M1390 400v-60l60-20M1410 260l-30 140M1140 420l170 80M1120 490l190 60M1110 530l100 50M1170 430l-80 180M1240 440l-60 180M1290 460l-80 220M1310 490l-60 50M1330 620l-30 60M1110 600l120 20M1220 700l40 100 170 120M1240 720l180 190M1390 480q90-10 110 10l-20 50-90-30zM1480 540l88 20M1290 560l60 60M1160 730l-60 120M1200 760l-30 60M1140 800l-60 70M1110 870l60 60M1070 880l-20 50M1020 860l-60 60M1020 800l110 60 50 60M1420 600l148 80M1450 560l118 60M1380 640l80 20M1400 690l168 120M1360 820l60-160M1420 790l80 60 30 80M1470 700l-50 110M1520 730l-50 120M1568 770l-50 90M1340 750l60-60"/>
        <path class="rd2" d="M1060 680l70 10h220l150-10 68 50M1160 710l90 90 100 40 90 80M1190 750l-20 20M1530 560l-50 90M1480 540l-60 110M1430 660l138 110M1450 740l-50 60 110 40 58-70M670 710l130 70 20 20-20 40M670 710l-10 40 70 60M480 630l40 15-25 135 180 30M500 740l170 50-5 35M540 820v30l100 20M0 640l50-20h35l5 190M750 95h18v30M870 20v50M430 350v50M125 820v30M870 550l-20 30M990 460v60M960 520v-60M830 830l-40 60M900 740l-30 40M1000 830l60 40"/>
        <path class="rd3" d="M1200 345q100 70 160 76 100 3 208-18"/>
      </svg>
      <svg x="1280" y="293" width="640" height="310" viewBox="0 0 1568 930" preserveAspectRatio="none">
        <path class="rd" d="M0 60l60 60 220 90 130 80 140 110 60 30M60 120l-60 40M0 100l50 20-50 70M110 0l-10 130M200 20l-10 120-40 60M300 0l-80 200-90 220M350 10l-110 240M400 60l-80 200M430 0l-60 190M500 0l-10 110-20 80M100 100l100 20M130 240l110 30M160 30h80M410 155l80-5v30M540 190l60-170M640 0v20M700 0l20 100M690 110h80M770 0v180M690 155h80M770 85h90M860 0v180M860 50h60M860 100h60M860 150h60M820 0v30l-60 40M700 40l60 10M700 70l60-10M0 300l50 50-40 60M10 320l90 30-20 70M130 350l-40 60M0 380l160 60M100 360h60v60M190 300l-10 120M200 315l100 10M300 190l40 50 140 10M310 180v260M480 185l-10 70-10 170M540 190v200M560 190v180M595 190v280M615 190v280M640 250v180M675 250l-35 0v170M675 250v70q10 40 70 40M615 318h60M710 250v60q20 30 60 10l40-30M710 250h200v-40H700M820 210v40M750 250v60M675 330v100M710 350v80M745 360l-20 60M780 420v50M310 240h60M350 280l60 80M380 310l-30 70M380 280q60 20 90 10M310 355h60M330 390l60 20M390 350l60 20M930 170v310M910 250v230M850 460l60 10M1568 15H1060q-20 0-20 30l-5 320-50 60v110M980 530l200-10 40-20h280M0 440l200 200M50 430l230 210M110 430l150 120M160 460l-70 110M200 440l60 60M0 500l190 190 30 60M0 580l240 200M0 640l160 130M50 500l-50 60M150 540l-60 60M280 480l-40 70 60 30M290 480l30 20M325 465v180l50 90M390 470l-10 140-20 110M350 470v200M390 600l90-20 5-80M430 470l-20 110M450 490l70 20 0 60M550 500v80M510 500l50-20M290 590l80 130M380 730l120-30 50-40M370 720l60-60 30 20M0 700l100 60 120 30M100 700l-40 80M130 760v50M230 770v50h60M100 790l-90 140M130 800l-60 130M50 780l-40 90M690 750v180M700 745l80-90 50-50M1568 750H840l-240-5M945 750v35M1100 745l40-10M600 500v430M390 845h110v85M465 850v80M390 845v60h70M370 870h30M400 910h110M200 930q0-60 20-60l10 60M260 860l-10 70M300 850l10 70M340 830l30 90M930 590l-60-80-30-10M920 600l-80-70"/>
        <path class="rd2" d="M920 0v180q-3 5-15 5H320l-15 250M920 8h648M40 10l30 40v70M240 0v200M475 185l-5 70M265 220l-15 100M200 310l20 130M460 370l-5 45M910 330v80l-50 60M820 480v-20l-70-10M810 330q-70 40-65 120M745 365l40-50M820 500l-50 5-20 20M600 430v315h-90q-20 0-70 55-50 20-220 45-40 5-90-40l-120-30M375 720l20 130M110 840l50 60M1568 360l-300 75-28 65 200-3 128-30M1420 405q0 50 40 80M1450 395q60 60 50 85M1568 180l-60 100-50 60-10 60M1568 480q-50 130-90 260l-30 190M950 585h40l50-45M1040 680l100 60 240 150M350 20l20 20M460 520l50 20"/>
        <path class="rd3" d="M0 405q40 15 140 25l180 25 250 8q80 5 180 45l250 150 390 240M640 480q150 30 400 200l100 70"/>
      </svg>

      <path class="highway-edge" d="M413 20 433 153 452 303 469 393 480 483 488 546 499 604"/>
      <path class="highway" d="M413 20 433 153 452 303 469 393 480 483 488 546 499 604"/>
      <path class="trunk-edge" d="M1297-4 1280 34 1244 110 1211 193 1168 299 1122 390 1081 486 1048 553 1032 582"/>
      <path class="trunk" d="M1297-4 1280 34 1244 110 1211 193 1168 299 1122 390 1081 486 1048 553 1032 582"/>

      <g class="shields">
        <rect x="407" y="33" width="17" height="12"/><rect x="430" y="196" width="17" height="12"/><rect x="471" y="494" width="17" height="12"/>
        <rect x="1199" y="192" width="22" height="12"/><rect x="1091" y="427" width="22" height="12"/>
        <text x="415" y="42">N4</text><text x="438" y="205">N4</text><text x="479" y="503">N4</text><text x="1210" y="201">R40</text><text x="1102" y="436">R40</text>
      </g>

      <g class="grey">
        <use href="#g-dot" x="0" y="268"/><use href="#g-school" x="550" y="138"/><use href="#g-dot" x="885" y="3"/><use href="#g-dot" x="1216" y="148"/><use href="#g-mosque" x="873" y="259"/><use href="#g-dot" x="1313" y="131"/><use href="#g-mosque" x="1451" y="216"/><use href="#g-school" x="1846" y="243"/>
        <use href="#g-dot" x="3" y="384"/><use href="#g-dot" x="322" y="359"/><use href="#g-dot" x="572" y="317"/><use href="#g-dot" x="471" y="375"/><use href="#g-dot" x="654" y="408"/><use href="#g-dot" x="322" y="467"/><use href="#g-dot" x="353" y="505"/><use href="#g-dot" x="56" y="534"/><use href="#g-dot" x="22" y="593"/><use href="#g-dot" x="973" y="399"/><use href="#g-dot" x="1126" y="399"/><use href="#g-dot" x="862" y="452"/><use href="#g-dot" x="1609" y="391"/><use href="#g-dot" x="1573" y="441"/><use href="#g-dot" x="1384" y="546"/>
      </g>
      <g class="pink">
        <use href="#g-bed" x="537" y="16"/><use href="#g-bed" x="124" y="151"/><use href="#g-bed" x="1247" y="167"/><use href="#g-bed" x="1614" y="68"/><use href="#g-bed" x="69" y="347"/><use href="#g-bed" x="489" y="426"/><use href="#g-bed" x="347" y="419"/><use href="#g-bed" x="781" y="343"/><use href="#g-bed" x="1035" y="441"/><use href="#g-bed" x="946" y="528"/><use href="#g-bed" x="922" y="595"/><use href="#g-bed" x="1347" y="466"/>
      </g>
      <g class="orange"><use href="#g-food" x="-6" y="153"/><use href="#g-food" x="472" y="193"/><use href="#g-food" x="1289" y="13"/><use href="#g-food" x="1164" y="314"/><use href="#g-food" x="527" y="568"/></g>
      <g class="blue"><use href="#g-bag" x="1261" y="54"/><use href="#g-cart" x="1657" y="23"/><use href="#g-bag" x="819" y="519"/></g>
      <g class="green"><use href="#g-dot" x="411" y="11"/><use href="#g-tree" x="1556" y="364"/><use href="#g-flower" x="1483" y="510"/></g>
      <g class="red"><use href="#g-hospital" x="1298" y="281"/></g>
      <g class="violet"><use href="#g-fuel" x="1034" y="589"/></g>
      <g><rect x="1126" y="361" width="14" height="14" rx="4" fill="#455a70" stroke="#fff"/><path d="M1130 364h6v7h-6zM1130 368h6M1131 371v2M1135 371v2" fill="none" stroke="#fff"/></g>
      <path d="M960 302c-2-11-13-14-13-24a13 13 0 0 1 26 0c0 10-11 13-13 24z" fill="#ea4335" stroke="#c5221f"/><circle cx="960" cy="278" r="5" fill="#a50e0e"/>

      <g class="label t-grey">
        <text x="15" y="275">Kponkpo</text><text x="1328" y="138">Baron Distilleries</text><text x="1866" y="286">Josito Pl</text><text x="526" y="415">JSM Court Oyarifa</text>
        <text x="1624" y="391">Regimanuel</text><text x="1624" y="405">estate Amanfrom</text><text x="0" y="108">O</text><text x="2" y="122">LACE CHAPEL</text>
      </g>
      <g class="label t-grey end">
        <text x="535" y="138">Happy Royal Int.School</text><text x="535" y="152">- Accra, Oyarifa High...</text><text x="870" y="10">E&amp;B Villa</text><text x="1201" y="155">Iridak Roofing Systems</text><text x="858" y="266">Gravel Pit Mosque</text><text x="1436" y="223">Amrahia Zongo Mosque</text><text x="1831" y="250">IB Arthur School</text><text x="307" y="366">Teiman Bus Station</text><text x="557" y="324">Kumsark Estates Limited</text><text x="456" y="382">Oyarifa After 6</text><text x="307" y="467">Kuottam Estates</text><text x="307" y="481">Limited - Ghana</text><text x="337" y="505">Palm Valley Estates</text><text x="337" y="519">(Kuottam Estates)</text><text x="41" y="534">wheels</text><text x="41" y="548">sports</text><text x="7" y="593">d</text><text x="957" y="406">Efie Plans Ghana Office</text><text x="1110" y="406">3D wireless Plus</text><text x="846" y="459">Rakil Ghana</text><text x="1557" y="441">Regimanuel Gray, Real</text><text x="1557" y="455">Estate Developer...</text><text x="1369" y="546">MC-Bauchemie</text><text x="1369" y="560">Ghana Limited</text>
      </g>
      <g class="label t-pink"><text x="552" y="23">Rehoboth Courts Estates</text><text x="1262" y="167">ZANTOLA</text><text x="1262" y="181">GUEST HOTEL</text><text x="504" y="433">Crystal Rock Hotel</text><text x="961" y="528">ORCHWOOD</text><text x="961" y="542">GUEST RESIDENCE</text></g>
      <g class="label t-pink end"><text x="9" y="50">es</text><text x="108" y="151">Burger Town</text><text x="108" y="165">Guest House</text><text x="1599" y="75">Amrahia Green City</text><text x="54" y="348">ILLVIEW</text><text x="54" y="362">CENTER</text><text x="331" y="426">Akorli's Hotel</text><text x="766" y="350">EKWAB ESTATE</text><text x="906" y="602">Ampomah estate</text><text x="1332" y="473">Rapid City Guest House</text></g>
      <g class="label t-orange"><text x="488" y="193">Boston's Garden</text><text x="488" y="207">Sports Bar &amp; Grill.</text><text class="end" x="1148" y="321">KFC Dodowa</text></g>
      <g class="label t-blue end"><text x="1245" y="54">The Glalims Gifts</text><text x="1245" y="68">&amp; Cosmetics</text><text x="1641" y="30">KT SuperMart</text><text x="804" y="526">D'days klothing</text><text class="street" x="1932" y="6">Shopping</text></g>
      <g class="label t-green end"><text x="1541" y="371">Nii Nuetey house</text><text x="1467" y="517">Rufus Green Parks</text></g>
      <text class="label t-red" x="975" y="289">Knox Place</text>
      <g class="label town"><text x="854" y="201">Danfa</text><text x="1364" y="78">Amrahia</text></g>
      <g class="label suburb"><text x="558" y="276">OYARIFA</text><text x="1073" y="569">ASHIYIE</text></g>
      <text class="label street t-grey" transform="translate(397 598) rotate(-42)">l Road</text>
      <text class="google" x="937" y="579"><tspan fill="#4285f4">G</tspan><tspan fill="#ea4335">o</tspan><tspan fill="#fbbc04">o</tspan><tspan fill="#4285f4">g</tspan><tspan fill="#34a853">l</tspan><tspan fill="#ea4335">e</tspan></text>
    </svg>

    <div class="place-card">
      <div>
        <h3>Knox Place</h3>
        <p class="address">Unnamed Road, Danfa, Ghana</p>
        <p class="rating"><span class="score">4.1</span>
          <svg width="55" height="11" viewBox="0 0 55 11" aria-hidden="true"><defs><path id="star" d="m5.500 0 1.700 3.700 3.800.4-2.900 2.600.9 4-3.500-2.100L2 10.700l.9-4L0 4.100l3.800-.4z"/></defs><g fill="#e7711b"><use href="#star"/><use href="#star" x="11"/><use href="#star" x="22"/><use href="#star" x="33"/></g><use href="#star" x="44" fill="#ccc"/></svg>
          <a href="#">16 reviews</a></p>
        <a href="#">View larger map</a>
      </div>
      <a class="directions" href="#">
        <svg width="20" height="20" viewBox="0 0 20 20"><path d="M1 2l7 8" stroke="#a9c7f5" stroke-width="4" fill="none"/><path d="M8.500 19v-7q0-2 2-4l5-4" stroke="#4a8fe7" stroke-width="4" fill="none"/><path d="M11 1h8v8z" fill="#4a8fe7"/></svg>
        Directions</a>
    </div>
    <button class="satellite" type="button" aria-label="Show satellite imagery"></button>
    <button class="camera" type="button" aria-label="Map camera controls"><svg width="24" height="24" viewBox="0 0 24 24"><path d="m8.500 5.500 3.500-3.500 3.500 3.500M8.500 18.500l3.500 3.500 3.500-3.500M5.500 8.500 2 12l3.500 3.500M18.500 8.500 22 12l-3.500 3.500"/></svg></button>
    <div class="legal"><a href="#">Keyboard shortcuts</a><span>Map data ©2025 Google</span><a href="#">Terms</a><a href="#">Report a map error</a></div>
  </section>
</main>

<footer class="footer">
  <div class="wrap footer-cols">
    <div class="about">
      <h4>About Us</h4>
      <p>We help organizations with their human capital-related activities. From talent acquisition, learning and development, coaching, and mentorship right through to outboard.</p>
      <div class="social">
        <a href="#" aria-label="Facebook"><svg><use href="#i-facebook"/></svg></a>
        <a href="#" aria-label="LinkedIn"><svg><use href="#i-linkedin"/></svg></a>
        <a href="#" aria-label="Instagram"><svg><use href="#i-instagram"/></svg></a>
        <a href="#" aria-label="WhatsApp"><svg><use href="#i-whatsapp"/></svg></a>
      </div>
    </div>
    <div><h4>Services</h4><ul class="links"><li><a href="#">All Services</a></li><li><a href="#">PART-TIME WORK</a></li><li><a href="#">AUXILIARY SERVICES</a></li><li><a href="#">CONSULTING SERVICES</a></li></ul></div>
    <div><h4>Usefull Links</h4><ul class="links"><li><a href="#">About Us</a></li><li><a href="#">Contact</a></li></ul></div>
    <div><h4>Locate Us</h4>
      <ul class="locate">
        <li><svg class="line-icon"><use href="#i-place"/></svg><p>HR – NURV CONSULT LTD. BH576 Pink Road<br>GM-159-2337 ACCRA-GHANA</p></li>
        <li><svg class="line-icon"><use href="#i-phone"/></svg><p>+233 0545455384<br>+233 0531136480</p></li>
        <li><svg class="line-icon"><use href="#i-mail"/></svg><p>info@hrnurvconsult.com<br>support@hrnurvconsult.com</p></li>
      </ul>
    </div>
  </div>
  <div class="copyright">Copyright 2023 All Rights Reserved | Images By DCStudio On Freepik</div>
</footer>
</body>
</html>
```

FILE: styles.css
```css
* { box-sizing: border-box; }
body { margin: 0; background: #fff; color: #666; font: 400 15px/27px Roboto, "Liberation Sans", sans-serif; }
h2, h3, h4, h5, h6, p, ul { margin: 0; padding: 0; }
ul { list-style: none; }
a { color: inherit; text-decoration: none; }
button { border: 0; padding: 0; font: inherit; cursor: pointer; }
svg { display: block; }
.sprite { position: absolute; width: 0; height: 0; }
.wrap { max-width: 1200px; margin: 0 auto; padding: 0 15px; }

/* Header */
.header-top { display: flex; justify-content: space-between; align-items: flex-start; padding-top: 29px; padding-bottom: 28px; }
.logo-name { font: 900 24px Lato, sans-serif; fill: #2b2e34; }
.logo-tag { font: 400 9px Lato, sans-serif; fill: #444; }
.logo-ring { font: 700 7px Lato, sans-serif; fill: #26333d; text-anchor: middle; }
.logo-ring-small { font: 400 3px Lato, sans-serif; fill: #26333d; text-anchor: middle; }
.facts { display: flex; gap: 18px; }
.fact { display: flex; gap: 14px; padding-top: 7px; height: 60px; }
.fact + .fact { padding-left: 18px; background: linear-gradient(#e5e5e5, #e5e5e5) 0 1px / 1px 40px no-repeat; }
.fact h6 { font-size: 13px; font-weight: 500; line-height: 18px; margin-bottom: 2px; }
.fact a { display: block; font-size: 14px; line-height: 24px; }
.fact p { font-size: 15px; line-height: 24px; }
.line-icon { width: 40px; height: 40px; flex: none; fill: none; stroke: #30d6c8; stroke-width: 1.5px; stroke-linejoin: round; }
.nav-row { border-top: 1px solid #e2e2e2; }
.nav-inner { display: flex; justify-content: space-between; align-items: center; height: 80px; padding-bottom: 2px; }
.nav { display: flex; gap: 30px; color: #222; font-size: 13px; font-weight: 500; line-height: 20px; }
.nav .active { color: #30d6c8; }
.search { margin-right: 10px; background: none; fill: none; stroke: #222; stroke-width: 1.5px; }

.crumbs { background: linear-gradient(#2fcfc2, #30d6c8 30px); }
.crumbs-inner { display: flex; align-items: center; height: 67px; color: #222; }
.crumbs-inner a { margin-left: 10px; fill: #222; }
.here { margin-left: 10px; color: #1b6a64; }

/* Contact */
.contact { display: grid; grid-template-columns: 420px 1fr; gap: 80px; padding-top: 119px; padding-bottom: 128px; }
h2 { color: #222; font-size: 30px; font-weight: 500; line-height: 40px; margin-bottom: 41px; }
.places { display: grid; gap: 41px; }
.places li { display: flex; gap: 20px; }
.disc { display: flex; flex: none; width: 60px; height: 60px; padding: 14px 16px; border-radius: 50%; background: #f1f1f1; }
.disc svg { width: 28px; height: 28px; fill: none; stroke: #222; stroke-width: 1.5px; }
h5 { color: #222; font-size: 16px; font-weight: 500; line-height: 22px; margin-bottom: 9px; }
.places p { max-width: 340px; }
.form { display: grid; grid-template-columns: 1fr 1fr; gap: 15px 30px; align-content: start; padding-top: 1px; }
.full { grid-column: 1 / -1; }
.form input, .form textarea { width: 100%; height: 60px; padding: 0 25px 2px; border: 0; border-radius: 3px; background: #f7f7f7; color: #222; font: 400 13px/20px Roboto, sans-serif; }
.form textarea { display: block; height: 240px; padding-top: 20px; }
.form ::placeholder { color: #999; opacity: 1; }
.form button { justify-self: start; height: 57px; margin-top: 15px; padding: 0 40px 3px; border-radius: 4px; background: #30d6c8; color: #fff; font-size: 15px; font-weight: 700; line-height: 20px; }

/* Map */
.map { position: relative; height: 600px; overflow: hidden; background: #f5f3f4; }
.map-canvas { width: 100%; height: 600px; }
.rd, .rd2, .rd3, .highway, .highway-edge, .trunk, .trunk-edge { fill: none; vector-effect: non-scaling-stroke; stroke-linejoin: round; }
.rd { stroke: #d3dee6; stroke-width: 1.25px; }
.rd2 { stroke: #d2dce4; stroke-width: 3px; }
.rd3 { stroke: #d2dce4; stroke-width: 4px; }
.highway-edge { stroke: #7690b3; stroke-width: 9px; }
.highway { stroke: #8ca6c4; stroke-width: 7px; }
.trunk-edge { stroke: #bccad6; stroke-width: 9px; }
.trunk { stroke: #d3dde5; stroke-width: 7px; }
.pin-shadow { fill: #0003; }
.grey { color: #78909c; }
.pink { color: #f941c8; }
.orange { color: #fb8527; }
.blue { color: #129eff; }
.green { color: #17a673; }
.red { color: #f6414f; }
.violet { color: #5f70d4; }
.shields rect { fill: #3a76c8; }
.shields text { fill: #fff; font: 700 9px Roboto, sans-serif; text-anchor: middle; }
.label { font: 400 14px Roboto, sans-serif; paint-order: stroke; stroke: #fff; stroke-width: 3px; stroke-linejoin: round; }
.end { text-anchor: end; }
.t-grey { fill: #546e7a; }
.t-pink { fill: #e723b0; }
.t-orange { fill: #d9630b; }
.t-blue { fill: #1a73e8; }
.t-green { fill: #0d8f60; }
.t-red { fill: #c5221f; }
.town { fill: #202124; font-size: 16px; font-weight: 500; text-anchor: middle; }
.suburb { fill: #3c4043; font-size: 13px; font-weight: 500; letter-spacing: 1px; text-anchor: middle; }
.street { font-size: 12px; }
.google { font: 700 15px Lato, sans-serif; paint-order: stroke; stroke: #fff; stroke-width: 2px; }
.place-card { position: absolute; top: 10px; left: 10px; display: flex; justify-content: space-between; width: 302px; padding: 8px 19px 7px 12px; background: #fff; box-shadow: 0 1px 4px #0000004d; font-size: 12px; line-height: 22px; }
.place-card a { color: #1a73e8; }
.place-card h3 { color: #000; font-size: 14px; font-weight: 500; line-height: 20px; }
.address { color: #5b5b5b; }
.rating { display: flex; align-items: center; gap: 3px; height: 30px; }
.rating a { margin-left: 9px; }
.score { color: #5b5b5b; font-size: 14px; }
.directions { display: grid; justify-items: center; align-content: start; padding-top: 5px; }
.satellite { position: absolute; bottom: 11px; left: 10px; width: 41px; height: 41px; border: 2px solid #fff; box-shadow: 0 1px 3px #0006; background: radial-gradient(ellipse at 70% 10%, #4d6340 0 15%, #6b6a4b 30%, transparent 45%), repeating-linear-gradient(35deg, #84705c 0 2px, #9a7f69 2px 4px, #776451 4px 5px); }
.camera { position: absolute; right: 10px; bottom: 24px; display: grid; place-items: center; width: 40px; height: 40px; border-radius: 50%; background: #fff; box-shadow: 0 1px 4px #0000004d; }
.camera path { fill: none; stroke: #666; stroke-width: 3px; }
.legal { position: absolute; right: 0; bottom: 0; display: flex; gap: 12px; padding: 0 6px; background: #f5f3f4b3; color: #000; font-size: 10px; line-height: 14px; }

/* Footer */
.footer { background: #121e30; color: #c8cbd0; }
.footer-cols { display: grid; grid-template-columns: 400px 200px 200px 1fr; padding-top: 122px; padding-bottom: 120px; }
h4 { color: #fff; font-size: 16px; font-weight: 500; line-height: 20px; margin-bottom: 31px; }
.about p { max-width: 385px; line-height: 29px; }
.social { display: flex; gap: 15px; margin-top: 33px; }
.social a { display: grid; place-items: center; width: 40px; height: 40px; border-radius: 50%; background: #293446; color: #fff; }
.social svg { width: 16px; height: 16px; fill: #fff; }
.links { display: grid; gap: 16px; }
.locate { display: grid; gap: 24px; }
.locate li { display: flex; gap: 20px; }
.locate .line-icon { width: 30px; height: 30px; margin-top: 8px; stroke: #fff; stroke-width: 2px; }
.copyright { padding: 30px 15px 32px; border-top: 1px solid #263140; background: #101723; text-align: center; }
```
